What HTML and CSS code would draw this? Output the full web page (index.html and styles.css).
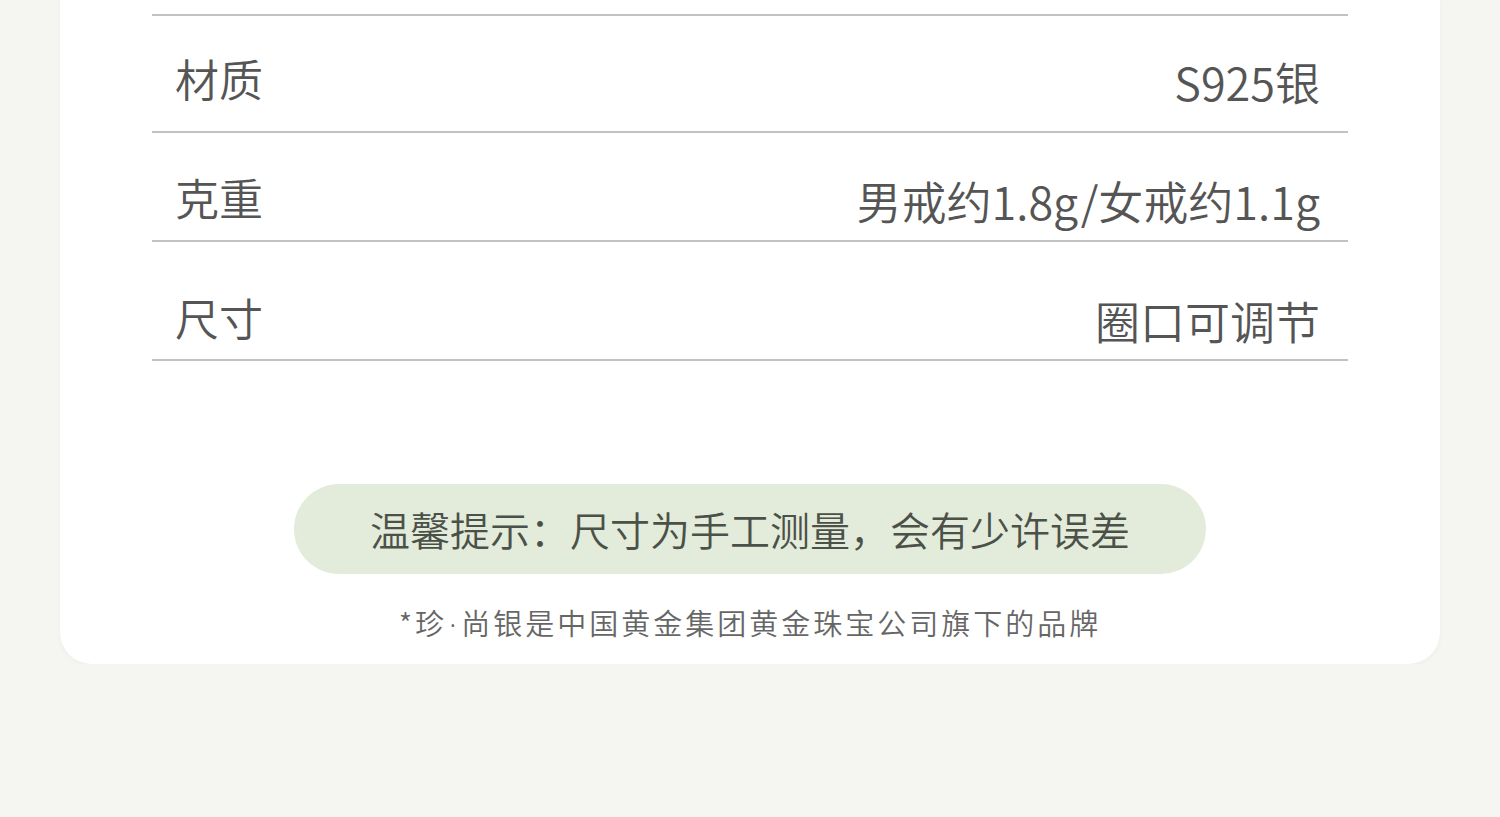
FILE: index.html
```html
<!DOCTYPE html>
<html lang="zh-CN">
<head>
  <meta charset="UTF-8" />
  <meta name="viewport" content="width=device-width, initial-scale=1.0" />
  <title>珍·尚银 产品参数</title>
  <link rel="stylesheet" href="styles.css">
</head>
<body>
  <div class="page">
    <div class="card">
      <div class="specs">
        <div class="spec-row row-material">
          <span class="spec-label">材质</span>
          <span class="spec-value">S925银</span>
        </div>
        <div class="spec-row row-weight">
          <span class="spec-label">克重</span>
          <span class="spec-value">男戒约1.8g/女戒约1.1g</span>
        </div>
        <div class="spec-row row-size">
          <span class="spec-label">尺寸</span>
          <span class="spec-value">圈口可调节</span>
        </div>
      </div>

      <div class="tip">温馨提示：尺寸为手工测量，会有少许误差</div>
      <p class="brand-note">*珍<span class="dot">·</span>尚银是中国黄金集团黄金珠宝公司旗下的品牌</p>
    </div>
  </div>
</body>
</html>
```

FILE: styles.css
```css
body {
  margin: 0;
  background: #f5f6f1;
  font-family: "Noto Sans CJK SC", "Noto Sans", sans-serif;
  color: #555;
}

.page {
  padding: 0 60px;
}

.card {
  background: #fff;
  border-radius: 0 0 32px 32px;
  padding: 14px 92px 22px;
  box-shadow: 0 2px 6px rgba(0, 0, 0, 0.03);
}

.specs {
  border-top: 2px solid #c2c2c2;
}

.spec-row {
  display: flex;
  justify-content: space-between;
  align-items: flex-start;
  padding: 0 28px 0 23px;
  border-bottom: 2px solid #c2c2c2;
  box-sizing: border-box;
}
.row-material { height: 117px; padding-top: 40px; }
.row-weight { height: 109px; padding-top: 42px; }
.row-size { height: 119px; padding-top: 53px; }

.spec-label {
  font-size: 44px;
  line-height: 44px;
  font-weight: 350;
}

.spec-value {
  margin-top: 3px;
  font-size: 45px;
  line-height: 46px;
  font-weight: 350;
}

.tip {
  width: 912px;
  height: 90px;
  margin: 123px auto 0;
  border-radius: 45px;
  background: #e3ebda;
  color: #4b5148;
  font-size: 40px;
  line-height: 90px;
  font-weight: 350;
  text-align: center;
}

.brand-note {
  margin: 30px 0 0;
  text-align: center;
  font-size: 29px;
  line-height: 36px;
  letter-spacing: 3px;
  font-weight: 350;
  color: #666;
}

.dot {
  font-family: "Noto Sans", sans-serif;
  margin: 0 2px;
}
```
